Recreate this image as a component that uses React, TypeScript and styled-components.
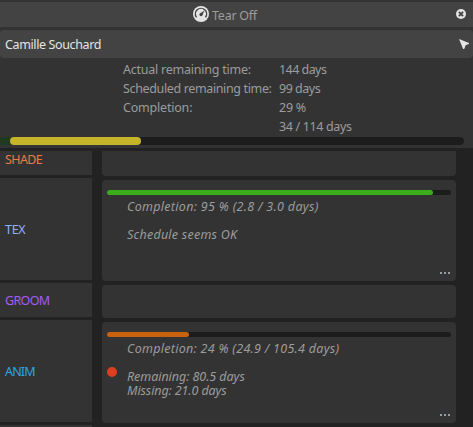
import React from 'react';
import styled, { createGlobalStyle } from 'styled-components';

const GlobalStyle = createGlobalStyle`
  * { box-sizing: border-box; }
  html, body { margin: 0; background: #222; overflow: hidden; }
  body { font: 12.5px/19px "Noto Sans", "Open Sans", sans-serif; color: #9c9c9c; }
`;

const Window = styled.main`
  display: flex;
  flex-direction: column;
  width: 473px;
  height: 427px;
  overflow: hidden;
  background: #222;
`;

const Summary = styled.header`
  flex: none;
  height: 148px;
  padding-top: 2px;
  background: #333;
`;

const TitleBar = styled.div`
  display: grid;
  grid-template-columns: 193px 16px 1fr 10px;
  height: 25px;
  padding: 4px 7px 0 0;
  background: #434343;

  > svg:first-child { grid-column: 2; }
  > svg:last-child { margin-top: 3px; }
`;

const Title = styled.span`
  padding: 1px 0 0 3px;
  line-height: 17px;
`;

const NameBar = styled.div`
  display: flex;
  justify-content: space-between;
  height: 28px;
  margin-top: 3px;
  padding: 5px 4px 0 5px;
  border-radius: 4px;
  background: #434343;
  color: #e4e4e4;
  line-height: 19px;

  svg { margin-top: 4px; }
`;

const Facts = styled.dl`
  display: grid;
  grid-template-columns: 156px 1fr;
  grid-auto-rows: 19px;
  height: 77px;
  margin: 0 0 0 123px;
  padding-top: 2px;
  white-space: nowrap;

  dt, dd { margin: 0; }
`;

const Label = styled.span<{ $spacing?: number }>`
  letter-spacing: ${({ $spacing = 0 }) => $spacing}px;
  white-space: nowrap;
`;

const OverallProgress = styled.div`
  display: flex;
  height: 8px;
  margin-top: 2px;
  margin-right: 9px;
  background: linear-gradient(to right, #1f3a20 14px, #1c1c1c 14px);
  border-radius: 0 4px 4px 0;
  padding-left: 10px;
`;

const Fill = styled.div<{ $width: number; $color: string }>`
  width: ${({ $width }) => $width}px;
  height: 100%;
  border-radius: 4px;
  background: ${({ $color }) => $color};
`;

const Board = styled.section`
  display: grid;
  grid-template-columns: 92px 354px;
  column-gap: 10px;
  height: 276px;
  margin-top: 3px;
  overflow: hidden;
`;

const Column = styled.div<{ $gap: number }>`
  display: flex;
  flex-direction: column;
  gap: ${({ $gap }) => $gap}px;
`;

const StepName = styled.div<{ $color: string; $height: number; $lift?: number }>`
  flex: none;
  display: flex;
  align-items: center;
  height: ${({ $height }) => $height}px;
  padding: 0 0 ${({ $lift = 0 }) => $lift}px 5px;
  background: #333;
  color: ${({ $color }) => $color};
`;

const Card = styled.article<{ $height: number; $cut?: boolean }>`
  flex: none;
  display: grid;
  grid-template-columns: 20px 1fr;
  grid-template-rows: 5px 1fr 4px;
  height: ${({ $height }) => $height}px;
  padding: ${({ $cut }) => ($cut ? '0' : '10px 5px 6px')};
  border-radius: ${({ $cut }) => ($cut ? '0 0 4px 4px' : '4px')};
  background: #333;
`;

const StepProgress = styled.div`
  grid-column: 1 / -1;
  height: 5px;
  border-radius: 3px;
  background: #1c1c1c;
`;

const Dot = styled.i`
  grid-column: 1;
  grid-row: 2;
  width: 10px;
  height: 10px;
  margin-top: 30px;
  border-radius: 50%;
  background: #dd3d20;
`;

const Notes = styled.div`
  grid-column: 2;
  grid-row: 2;
  display: flex;
  flex-direction: column;
  padding-top: 5px;
  font-style: italic;
  line-height: 14px;
`;

const NoteLine = styled(Label)`
  height: 14px;
`;

const More = styled.div`
  grid-column: 1 / -1;
  grid-row: 3;
  justify-self: end;
  display: flex;
  gap: 2px;
  padding: 1px 1px 0 0;

  i { width: 2px; height: 2px; background: #949ba3; }
`;

function Gauge() {
  return (
    <svg width="16" height="16" viewBox="0 0 16 16">
      <circle cx="8" cy="8" r="8" fill="#e4e4e4" />
      <path d="M3.5 11.3A5.6 5.6 0 1 1 12.5 11.3" fill="none" stroke="#434343" strokeWidth="1.4" />
      <path d="M7 7.5 11.6 4.4 9.2 9.2Z" fill="#434343" />
      <circle cx="8" cy="8.6" r="1.6" fill="#434343" />
    </svg>
  );
}

function CloseIcon() {
  return (
    <svg width="10" height="10" viewBox="0 0 10 10">
      <circle cx="5" cy="5" r="5" fill="#e4e4e4" />
      <path d="m2.9 2.9 4.2 4.2m0-4.2L2.9 7.1" stroke="#434343" strokeWidth="1.8" />
    </svg>
  );
}

function PointerIcon() {
  return (
    <svg width="10" height="10" viewBox="0 0 10 10">
      <path d="M0 0 10 4.1V5L6.8 6 5.2 10H4.1Z" fill="#e4e4e4" />
    </svg>
  );
}

function Ellipsis() {
  return <More><i /><i /><i /></More>;
}

export default function App() {
  return (
    <Window>
      <GlobalStyle />
      <Summary>
        <TitleBar>
          <Gauge />
          <Title><Label $spacing={-0.25}>Tear Off</Label></Title>
          <CloseIcon />
        </TitleBar>
        <NameBar><Label $spacing={-0.38}>Camille Souchard</Label><PointerIcon /></NameBar>
        <Facts>
          <dt><Label $spacing={-0.23}>Actual remaining time:</Label></dt>
          <dd><Label $spacing={-0.55}>144 days</Label></dd>
          <dt><Label $spacing={-0.36}>Scheduled remaining time:</Label></dt>
          <dd><Label $spacing={-0.5}>99 days</Label></dd>
          <dt><Label $spacing={-0.2}>Completion:</Label></dt>
          <dd><Label $spacing={-0.25}>29 %</Label></dd>
          <dt />
          <dd><Label $spacing={-0.35}>34 / 114 days</Label></dd>
        </Facts>
        <OverallProgress><Fill $width={131} $color="#c6b42a" /></OverallProgress>
      </Summary>
      <Board>
        <Column $gap={3}>
          <StepName $height={24} $lift={8} $color="#f0764f"><Label $spacing={-0.6}>SHADE</Label></StepName>
          <StepName $height={102} $color="#8fb0ff"><Label $spacing={-0.3}>TEX</Label></StepName>
          <StepName $height={34} $color="#a35cf5"><Label $spacing={-0.65}>GROOM</Label></StepName>
          <StepName $height={102} $color="#2da5ea"><Label $spacing={-0.85}>ANIM</Label></StepName>
          <StepName $height={34} $color="#333" />
        </Column>
        <Column $gap={4}>
          <Card $height={25} $cut />
          <Card $height={101}>
            <StepProgress><Fill $width={326} $color="#3bad1b" /></StepProgress>
            <Notes>
              <NoteLine $spacing={0.31}>Completion: 95 % (2.8 / 3.0 days)</NoteLine>
              <NoteLine />
              <NoteLine $spacing={0.24}>Schedule seems OK</NoteLine>
            </Notes>
            <Ellipsis />
          </Card>
          <Card $height={33} />
          <Card $height={101}>
            <StepProgress><Fill $width={82} $color="#c9620f" /></StepProgress>
            <Dot />
            <Notes>
              <NoteLine $spacing={0.29}>Completion: 24 % (24.9 / 105.4 days)</NoteLine>
              <NoteLine />
              <NoteLine $spacing={-0.05}>Remaining: 80.5 days</NoteLine>
              <NoteLine $spacing={-0.1}>Missing: 21.0 days</NoteLine>
            </Notes>
            <Ellipsis />
          </Card>
        </Column>
      </Board>
    </Window>
  );
}
